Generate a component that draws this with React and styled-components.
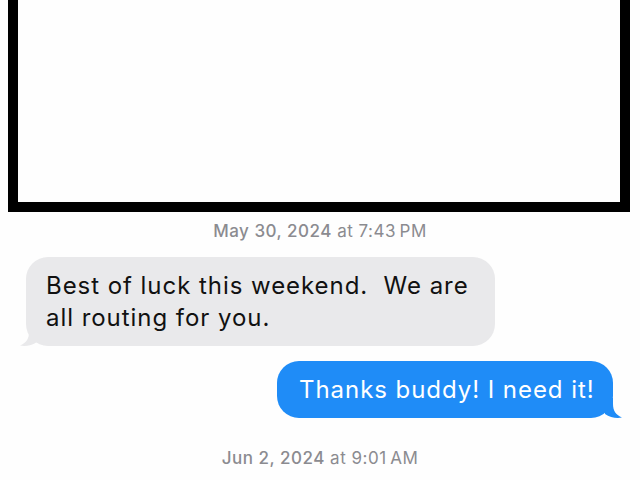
import React from "react";
import styled, { createGlobalStyle } from "styled-components";

const GlobalStyle = createGlobalStyle`
  html, body {
    margin: 0;
    padding: 0;
    background: #fefefe;
    font-family: Inter, "Noto Sans", "Liberation Sans", sans-serif;
    -webkit-font-smoothing: antialiased;
  }
`;

const Thread = styled.div`
  width: 640px;
  height: 480px;
  overflow: hidden;
  display: flex;
  flex-direction: column;
`;

const Attachment = styled.div`
  box-sizing: border-box;
  height: 212px;
  margin: 0 10px 0 8px;
  border: 10px solid #000;
  border-top: none;
  background: #fefefe;
  flex-shrink: 0;
`;

const Stamp = styled.div`
  text-align: center;
  font-size: 17px;
  line-height: 20px;
  letter-spacing: 0.5px;
  color: #8b8b90;
  margin-top: ${(p) => p.$top}px;
  margin-bottom: ${(p) => p.$bottom || 0}px;

  b {
    font-weight: 500;
  }
`;

const Row = styled.div`
  display: flex;
  justify-content: ${(p) => (p.$mine ? "flex-end" : "flex-start")};
  padding: ${(p) => (p.$mine ? "0 27px 0 0" : "0 0 0 26px")};
  margin-bottom: ${(p) => p.$gap || 0}px;
`;

const Bubble = styled.div`
  position: relative;
  box-sizing: border-box;
  padding: 13px 0 12px 20px;
  border-radius: 22px;
  font-size: 24px;
  line-height: 32px;
  letter-spacing: 0.95px;
  background: ${(p) => (p.$mine ? "#1f8cf7" : "#e9e9eb")};
  color: ${(p) => (p.$mine ? "#fff" : "#111")};
  width: ${(p) => p.$width}px;
  padding-left: ${(p) => (p.$mine ? 22 : 20)}px;
  white-space: pre;
`;

const TailSvg = styled.svg`
  position: absolute;
  bottom: 0;
  width: 17px;
  height: 20px;
  ${(p) =>
    p.$mine
      ? "right: -9px;"
      : "left: -6px; transform: scaleX(-1);"}
`;

const Tail = ({ mine, color }) => (
  <TailSvg $mine={mine} viewBox="0 0 17 20">
    <path
      d="M0 0 L8 0 L8 6 C8 13 11 17 17 19.6 C11 20.4 5 19.6 0 16 Z"
      fill={color}
    />
  </TailSvg>
);

export default function App() {
  return (
    <>
      <GlobalStyle />
      <Thread>
        <Attachment />
        <Stamp $top={9} $bottom={16}>
          <b>May 30, 2024</b> at 7:43{"\u2009"}PM
        </Stamp>
        <Row $gap={15}>
          <Bubble $width={469}>
            {"Best of luck this weekend.  We are\nall routing for you."}
            <Tail color="#e9e9eb" />
          </Bubble>
        </Row>
        <Row $mine>
          <Bubble $mine $width={336}>
            Thanks buddy! I need it!
            <Tail mine color="#1f8cf7" />
          </Bubble>
        </Row>
        <Stamp $top={30}>
          <b>Jun 2, 2024</b> at 9:01{"\u2009"}AM
        </Stamp>
      </Thread>
    </>
  );
}
